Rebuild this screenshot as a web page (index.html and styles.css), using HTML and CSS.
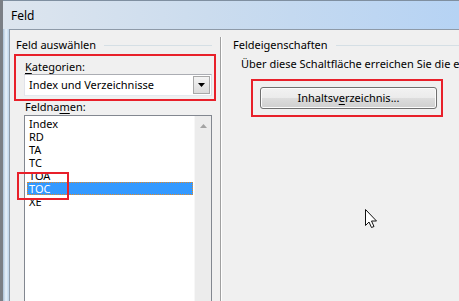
FILE: index.html
```html
<!DOCTYPE html>
<html lang="de">
<head>
  <meta charset="UTF-8">
  <title>Feld</title>
  <link rel="stylesheet" href="styles.css">
</head>
<body>
  <div class="window">
    <div class="titlebar"><span class="title">Feld</span></div>

    <div class="client">
      <!-- Feld auswählen -->
      <div class="pane pane-left">
        <div class="group-head"><span>Feld auswählen</span><span class="rule"></span></div>

        <div class="mark mark-category">
          <div class="label label-top"><u>K</u>ategorien:</div>
          <div class="combo">
            <span class="combo-text">Index und Verzeichnisse</span>
            <span class="drop">
              <svg width="7" height="4" viewBox="0 0 7 4"><path d="M0 0h7L3.5 4z" fill="#000"/></svg>
            </span>
          </div>
        </div>

        <div class="label label-names">Feldna<u>m</u>en:</div>
        <div class="listbox">
          <ul class="items">
            <li>Index</li>
            <li>RD</li>
            <li>TA</li>
            <li>TC</li>
            <li>TOA</li>
            <li class="selected">TOC</li>
            <li>XE</li>
          </ul>
          <div class="scrollbar">
            <svg width="7" height="4" viewBox="0 0 7 4"><path d="M3.5 0L7 4H0z" fill="#a3a3a3"/></svg>
          </div>
          <div class="mark mark-toc"></div>
        </div>
      </div>

      <div class="divider"></div>

      <!-- Feldeigenschaften -->
      <div class="pane pane-right">
        <div class="group-head"><span>Feldeigenschaften</span><span class="rule"></span></div>
        <p class="hint">Über diese Schaltfläche erreichen Sie die erweiterten Feldeigenschaften.</p>
        <div class="mark mark-button">
          <button class="btn">Inhaltsv<u>e</u>rzeichnis...</button>
        </div>

        <svg class="cursor" width="13" height="20" viewBox="0 0 13 20">
          <path d="M0.5 0.5v16l3.5-3.5 2.5 5.5 2.5-1-2.5-5.5h5z" fill="#fff" stroke="#111" stroke-width="1"/>
        </svg>
      </div>
    </div>
  </div>
</body>
</html>
```

FILE: styles.css
```css
* {
  box-sizing: border-box;
}
body {
  margin: 0;
  background: #7b7f85;
  font-family: "Noto Sans", "Open Sans", sans-serif;
  font-size: 11px;
  color: #000;
  overflow: hidden;
}
u {
  text-decoration-thickness: 1px;
  text-underline-offset: 2px;
}
.window {
  margin-left: 3px;
  height: 301px;
  display: flex;
  flex-direction: column;
  background: linear-gradient(to right, #aac1d8 0, #e9f2fb 3px, #bcd3ea 6px);
}
.titlebar {
  height: 29px;
  flex: none;
  padding: 8px 0 0 8px;
  border-top: 1px solid #7f8fa0;
  background: linear-gradient(to right, #dde5ee 0, #cbdcee 45%, #b6d3f4 100%);
  line-height: 14px;
}
.title {
  font-size: 12px;
}
.client {
  flex: 1;
  margin-left: 6px;
  display: flex;
  background: #f0f0f0;
  border-top: 1px solid #8e9aa8;
  border-left: 1px solid #8e9aa8;
}
.pane {
  position: relative;
  line-height: 13px;
}
.pane-left {
  width: 210px;
  flex: none;
}
.pane-right {
  flex: 1;
  padding-left: 11px;
  white-space: nowrap;
  overflow: hidden;
}
.divider {
  width: 2px;
  flex: none;
  margin-top: 7px;
  border-left: 1px solid #a0a0a0;
  border-right: 1px solid #fff;
}
.group-head {
  display: flex;
  align-items: center;
  gap: 8px;
  margin-top: 8px;
}
.pane-left .group-head {
  padding-left: 6px;
  margin-right: 8px;
}
.rule {
  flex: 1;
  height: 1px;
  margin-top: 1px;
  background: #d5dfe5;
}
.mark {
  border: 2px solid #e8202a;
}
.mark-category {
  width: 202px;
  margin: 3px 0 0 4px;
  padding: 4px 2px 3px 8px;
}
.label-top {
  margin-left: 1px;
}
.combo {
  display: flex;
  align-items: center;
  margin-top: 1px;
  width: 188px;
  height: 22px;
  padding: 1px;
  background: #fff;
  border: 1px solid #abadb3;
  border-color: #abadb3 #dbdfe6 #e3e9ef #e2e3ea;
}
.combo-text {
  flex: 1;
  padding-left: 3px;
  line-height: 20px;
}
.drop {
  width: 17px;
  height: 18px;
  display: flex;
  align-items: center;
  justify-content: center;
  border: 1px solid #a8a8a8;
  background: linear-gradient(#f4f4f4, #dcdcdc);
}
.label-names {
  margin: -1px 0 0 15px;
}
.listbox {
  position: relative;
  display: flex;
  margin: 2px 0 0 14px;
  width: 188px;
  height: 200px;
  padding: 1px 0 0 2px;
  background: #fff;
  border: 1px solid #828790;
}
.items {
  list-style: none;
  margin: 0;
  padding: 0;
  width: 166px;
}
.items li {
  height: 13px;
  padding-left: 2px;
}
.items li.selected {
  background: #3399ff;
  color: #fff;
  outline: 1px dotted #e08a2a;
  outline-offset: -1px;
}
.scrollbar {
  width: 17px;
  margin: -1px 0 0 1px;
  padding-top: 8px;
  display: flex;
  justify-content: center;
  align-items: flex-start;
  background: #ececec;
  border-left: 1px solid #f7f7f7;
}
.mark-toc {
  position: absolute;
  left: -8px;
  top: 56px;
  width: 52px;
  height: 28px;
}
.hint {
  margin: 6px 0 0 8px;
}
.mark-button {
  width: 192px;
  margin: 9px 0 0 18px;
  padding: 6px 4px 6px 7px;
}
.btn {
  display: block;
  width: 177px;
  height: 22px;
  padding: 0;
  font: inherit;
  line-height: 18px;
  color: #000;
  border: 1px solid #707070;
  border-radius: 3px;
  background: linear-gradient(#f2f2f2 0, #ebebeb 50%, #dddddd 51%, #cfcfcf 100%);
  box-shadow: inset 0 0 0 1px #fcfcfc;
}
.cursor {
  position: absolute;
  left: 143px;
  top: 179px;
}
```
